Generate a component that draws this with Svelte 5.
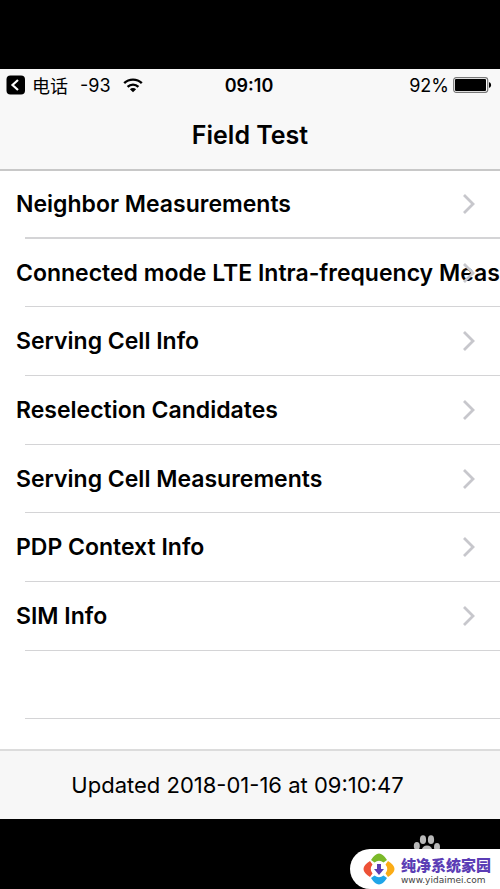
<!--
  Field Test home screen: status bar, list of test menus, last update time.
-->
<script>
  const items = [
    'Neighbor Measurements',
    'Connected mode LTE Intra-frequency Measurements',
    'Serving Cell Info',
    'Reselection Candidates',
    'Serving Cell Measurements',
    'PDP Context Info',
    'SIM Info',
  ];

  let { updated = '2018-01-16 at 09:10:47', signal = -93, battery = 92 } = $props();
</script>

<div class="page">
  <div class="phone">
    <header>
      <div class="status">
        <div class="side">
          <button class="back" aria-label="返回电话">
            <svg width="20" height="20" viewBox="0 0 20 20" aria-hidden="true">
              <rect x="0.5" y="0.5" width="18.5" height="19" rx="4" fill="#000" />
              <path d="M12 5 6.5 10l5.5 5" fill="none" stroke="#fff" stroke-width="2.2" />
            </svg>
            <span>电话</span>
          </button>
          <span class="signal">{signal}</span>
          <svg width="20" height="15" viewBox="0 0 20 15" aria-hidden="true">
            <g fill="none" stroke="#000" stroke-width="2.4">
              <path d="M1.2 5.2a12.5 12.5 0 0 1 17.6 0" />
              <path d="M4.6 8.8a7.7 7.7 0 0 1 10.8 0" />
            </g>
            <path d="M10 14.3 6.9 11.2a4.4 4.4 0 0 1 6.2 0z" />
          </svg>
        </div>
        <time>09:10</time>
        <div class="side end">
          <span>{battery}%</span>
          <svg width="39" height="16" viewBox="0 0 39 16" aria-hidden="true">
            <rect x="0.7" y="0.7" width="34" height="14.6" rx="2.5" fill="#fff" stroke="#777" stroke-width="1.2" />
            <rect x="2" y="2" width="31" height="12" rx="1" />
            <path d="M36 5.2c2.8.5 2.8 5.1 0 5.6z" />
          </svg>
        </div>
      </div>
      <h1>Field Test</h1>
    </header>

    <ul>
      {#each items as item}
        <li>
          <a href="#top">
            <span>{item}</span>
            <svg width="14" height="22" viewBox="0 0 14 22" aria-hidden="true">
              <path d="M2 2l9 9-9 9" fill="none" stroke="#c7c7cc" stroke-width="2.8" />
            </svg>
          </a>
        </li>
      {/each}
      <li></li>
    </ul>

    <footer>Updated {updated}</footer>
  </div>

  <div class="bottom">
    <a class="mark" href="#top">
      <svg class="paw" width="28" height="14" viewBox="0 0 28 14" fill="#b9b9b9" aria-hidden="true">
        <ellipse cx="10" cy="4.7" rx="3.1" ry="4.4" />
        <ellipse cx="18" cy="4.7" rx="3.1" ry="4.4" />
        <ellipse cx="3.8" cy="11" rx="3" ry="4" />
        <ellipse cx="24" cy="12" rx="3" ry="4" />
        <path d="M14 10.5c-3 0-4 1.500-5 3.500h10c-1-2-2-3.500-5-3.500z" />
      </svg>
      <svg width="32" height="32" viewBox="0 0 32 32" aria-hidden="true">
        <path d="M8 7Q16-6 24 7L20.500 9.500Q16 6 11.500 9.500z" fill="#7ab929" />
        <path d="M25 8Q38 16 25 24L22.500 20.500Q26 16 22.500 11.500z" fill="#fbac16" />
        <path d="M24 25Q16 38 8 25L11.500 22.500Q16 26 20.500 22.500z" fill="#20a5e8" />
        <path d="M7 24Q-6 16 7 8L9.500 11.500Q6 16 9.500 20.500z" fill="#ed5136" />
        <path d="M14 11h4v5h3L16 22 11 16h3z" fill="#5b3db5" />
      </svg>
      <span class="brand">
        <strong>纯净系统家园</strong>
        <small>www.yidaimei.com</small>
      </span>
    </a>
  </div>
</div>

<style>
  :global(body) {
    margin: 0;
    background: #000;
  }

  .page {
    display: flex;
    flex-direction: column;
    min-height: 100vh;
    box-sizing: border-box;
    padding-top: 69px;
    overflow: hidden;
    font-family: Inter, 'Noto Sans CJK SC', sans-serif;
    color: #000;
  }

  .phone {
    background: #fff;
  }

  header {
    background: #f8f8f8;
    border-bottom: 2px solid #c8c8c8;
  }

  .status {
    display: flex;
    align-items: center;
    height: 32px;
    padding: 0 8px 0 6px;
    font-size: 18px;
  }

  .side {
    flex: 1;
    display: flex;
    align-items: center;
  }

  .end {
    justify-content: flex-end;
    gap: 4px;
  }

  .back {
    display: flex;
    align-items: center;
    gap: 6px;
    padding: 0;
    border: 0;
    background: none;
    font: inherit;
    color: inherit;
  }

  .signal {
    margin: 0 12px;
  }

  time {
    font-weight: 600;
  }

  h1 {
    margin: 0;
    height: 68px;
    line-height: 68px;
    text-align: center;
    font-size: 25px;
    font-weight: 600;
  }

  ul {
    margin: 0;
    padding: 0 0 30px;
    list-style: none;
  }

  li {
    box-sizing: border-box;
    height: 69px;
    padding-bottom: 1px;
    background: linear-gradient(#d4d4d6, #d4d4d6) 25px 100% / 100% 1px no-repeat;
  }

  li:nth-child(3n + 2) {
    height: 68px;
  }

  li:first-child {
    height: 68px;
    padding-bottom: 2px;
    background-size: 100% 2px;
  }

  a {
    color: inherit;
    text-decoration: none;
  }

  li a {
    display: flex;
    align-items: center;
    height: 100%;
    padding: 0 24px 0 16px;
    font-size: 23px;
    font-weight: 600;
    white-space: nowrap;
  }

  li span {
    flex: 1;
    min-width: 0;
  }

  li svg {
    flex: none;
  }

  footer {
    height: 68px;
    line-height: 68px;
    padding-right: 25px;
    background: #f7f7f7;
    border-top: 2px solid #dcdcdc;
    text-align: center;
    font-size: 22px;
  }

  .bottom {
    flex: 1;
    display: flex;
    align-items: flex-end;
    justify-content: flex-end;
  }

  .mark {
    position: relative;
    display: flex;
    align-items: center;
    gap: 6px;
    height: 40px;
    padding: 0 9px 0 13px;
    border-radius: 20px 0 0 20px;
    background: #fff;
  }

  .paw {
    position: absolute;
    left: 63px;
    bottom: 100%;
  }

  .brand {
    display: flex;
    flex-direction: column;
    padding-top: 4px;
  }

  .brand strong {
    font-family: 'Noto Sans CJK SC', sans-serif;
    font-size: 15px;
    line-height: 18px;
    font-weight: 900;
    color: #5b3db5;
  }

  .brand small {
    font-family: 'DejaVu Sans', sans-serif;
    font-size: 9px;
    line-height: 12px;
    color: #444;
  }
</style>
